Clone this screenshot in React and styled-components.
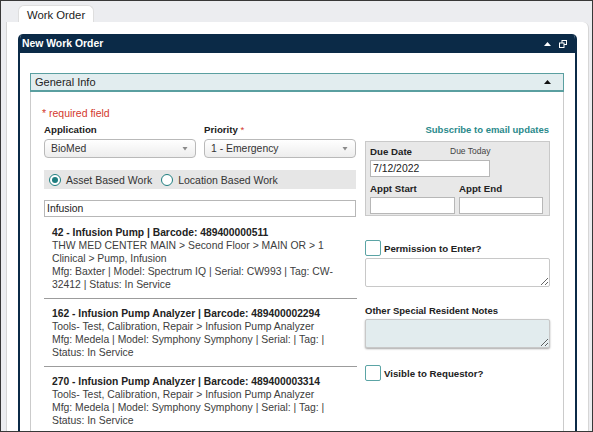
import React from "react";
import styled, { createGlobalStyle } from "styled-components";

const Global = createGlobalStyle`
  html, body { margin: 0; padding: 0; }
  body { font-family: "Liberation Sans", Arial, sans-serif; color: #333; }
  * { box-sizing: border-box; }
`;

const NAVY = "#0b2a47";
const TEAL = "#2a8a8b";

const Frame = styled.div`
  width: 593px;
  height: 432px;
  border: 1px solid #383838;
  background: #ecedf0;
  overflow: hidden;
  display: flex;
  flex-direction: column;
`;

const TabBar = styled.div`
  display: flex;
  padding: 4px 0 0 17px;
  flex: none;
`;

const Tab = styled.div`
  height: 17px;
  line-height: 18px;
  padding: 0 8px;
  background: #fff;
  border: 1px solid #dedede;
  border-bottom: none;
  border-radius: 6px 6px 0 0;
  font-size: 11.3px;
  color: #222;
`;

const Panel = styled.div`
  flex: 1;
  min-height: 0;
  margin: 0 3px 0 5px;
  padding: 12px 11px 0 11px;
  background: #fff;
  border-left: 1px solid #d6d6d6;
  border-right: 1px solid #d6d6d6;
  border-radius: 0 6px 0 0;
  display: flex;
  flex-direction: column;
`;

const Window = styled.div`
  flex: 1;
  min-height: 0;
  display: flex;
  flex-direction: column;
  border-radius: 5px 5px 0 0;
  overflow: hidden;
  background: #fff;
  border-left: 2px solid ${NAVY};
  border-right: 2px solid ${NAVY};
`;

const WindowHeader = styled.div`
  height: 19px;
  flex: none;
  background: ${NAVY};
  display: flex;
  align-items: center;
  justify-content: space-between;
  padding: 0 8px 0 2px;
  color: #fff;
  font-weight: bold;
  font-size: 10.4px;
`;

const HeaderIcons = styled.div`
  display: flex;
  align-items: center;
  gap: 8px;
`;

const WindowBody = styled.div`
  flex: 1;
  padding: 20px 11px 0 10px;
`;

const Section = styled.div`
  display: flex;
  flex-direction: column;
  height: 100%;
`;

const SectionHeader = styled.div`
  height: 19px;
  border: 1px solid #5a9fa0;
  border-bottom-width: 2px;
  background: #e2edef;
  display: flex;
  align-items: center;
  justify-content: space-between;
  padding: 0 12px 0 4px;
  font-size: 11px;
  color: #222;
`;

const SectionBody = styled.div`
  flex: 1;
  border-left: 1px solid #cbcbcb;
  border-right: 1px solid #cbcbcb;
  padding: 15px 13px 0 13px;
  display: grid;
  grid-template-columns: 313px 185px;
  grid-template-rows: auto 1fr;
  column-gap: 8px;
  align-content: start;
`;

const Required = styled.div`
  grid-column: 1 / span 2;
  color: #d3382d;
  font-size: 10.5px;
  line-height: 13px;
  margin-left: -2px;
  margin-bottom: -1px;
`;

const Column = styled.div`
  display: flex;
  flex-direction: column;
`;

const FieldRow = styled.div`
  display: grid;
  grid-template-columns: 152px 152px;
  column-gap: 8px;
  margin-top: 4px;
`;

const Label = styled.div`
  font-weight: bold;
  font-size: 9.7px;
  line-height: 13px;
  color: #222;
`;

const Star = styled.span`
  color: #d3382d;
  font-weight: normal;
`;

const Select = styled.div`
  margin-top: 3px;
  height: 19px;
  border: 1px solid #b9b9b9;
  border-radius: 4px;
  background: linear-gradient(#ffffff, #ededed);
  display: flex;
  align-items: center;
  justify-content: space-between;
  padding: 0 7px 0 6px;
  font-size: 10.4px;
  color: #333;
`;

const RadioBar = styled.div`
  margin-top: 12px;
  height: 19px;
  width: 312px;
  background: #e6e6e6;
  display: flex;
  align-items: center;
  padding-left: 5px;
  font-size: 10.5px;
  color: #333;
`;

const RadioOption = styled.label`
  display: flex;
  align-items: center;
  gap: 5px;
  margin-right: 9px;
`;

const RadioCircle = styled.span`
  width: 12px;
  height: 12px;
  border-radius: 50%;
  border: 1.4px solid #1f7e80;
  display: flex;
  align-items: center;
  justify-content: center;
  background: #fff;
  &::after {
    content: "";
    width: 6px;
    height: 6px;
    border-radius: 50%;
    background: ${(p) => (p.$checked ? "#1f7e80" : "transparent")};
  }
`;

const TextInput = styled.div`
  margin-top: ${(p) => p.$mt || 0}px;
  width: ${(p) => p.$w}px;
  height: 17px;
  border: 1px solid #b7b7b7;
  background: #fff;
  font-size: 10.4px;
  line-height: 15px;
  padding-left: 2px;
  color: #222;
`;

const List = styled.div`
  margin-top: 1px;
  display: flex;
  flex-direction: column;
`;

const Item = styled.div`
  padding: 8px 16px 7px 8px;
  border-bottom: 1px solid #9c9c9c;
  font-size: 10.4px;
  line-height: 13px;
  color: #3d3d3d;
  &:last-child { border-bottom: none; }
`;

const ItemTitle = styled.div`
  font-weight: bold;
  font-size: 10.3px;
  color: #222;
`;

const Subscribe = styled.div`
  margin-top: 4px;
  text-align: right;
  padding-right: 1px;
  font-weight: bold;
  font-size: 9.5px;
  line-height: 13px;
  color: ${TEAL};
`;

const DueBox = styled.div`
  margin-top: 5px;
  height: 75px;
  border: 1px solid #c9c9c9;
  background: #e8e8e8;
  padding: 3px 5px 0 4px;
  display: flex;
  flex-direction: column;
`;

const DueHeader = styled.div`
  display: grid;
  grid-template-columns: 80px auto;
  align-items: center;
`;

const DueToday = styled.div`
  font-size: 8.5px;
  color: #444;
  line-height: 13px;
`;

const ApptGrid = styled.div`
  margin-top: 5px;
  display: grid;
  grid-template-columns: 85px 84px;
  column-gap: 4px;
  row-gap: 2px;
`;

const CheckRow = styled.label`
  margin-top: ${(p) => p.$mt}px;
  display: flex;
  align-items: center;
  gap: 3px;
`;

const CheckBox = styled.span`
  width: 16px;
  height: 16px;
  border: 1.3px solid #5ba4a5;
  border-radius: 2px;
  background: #fff;
`;

const CheckLabel = styled.span`
  font-weight: bold;
  font-size: 9.7px;
  color: #222;
`;

const TextArea = styled.textarea`
  display: block;
  margin-top: ${(p) => p.$mt}px;
  width: 185px;
  height: 29px;
  border: 1px solid #c8c8c8;
  border-radius: 2px;
  background: ${(p) => (p.$tinted ? "#e2ecee" : "#fff")};
  box-shadow: ${(p) => (p.$tinted ? "0 1px 2px rgba(0,0,0,0.35)" : "none")};
  resize: both;
  outline: none;
  padding: 2px;
  font-family: inherit;
`;

const NotesLabel = styled(Label)`
  margin-top: 17px;
  font-size: 9.5px;
`;

const Caret = ({ color = "#8a8a8a" }) => (
  <svg width="6" height="4" viewBox="0 0 6 4">
    <polygon points="0.5,0 5.5,0 3,3.5" fill={color} />
  </svg>
);

const UpTri = ({ color }) => (
  <svg width="7" height="4" viewBox="0 0 7 4">
    <polygon points="0,4 7,4 3.5,0" fill={color} />
  </svg>
);

const RestoreIcon = () => (
  <svg width="8" height="8" viewBox="0 0 8 8">
    <rect x="3" y="0.5" width="4.5" height="4" fill="none" stroke="#fff" strokeWidth="1" />
    <rect x="0.5" y="3" width="4.5" height="4.5" fill={NAVY} stroke="#fff" strokeWidth="1" />
  </svg>
);

const items = [
  {
    title: "42 - Infusion Pump | Barcode: 489400000511",
    path: "THW MED CENTER MAIN > Second Floor > MAIN OR > 1 Clinical > Pump, Infusion",
    info: "Mfg: Baxter | Model: Spectrum IQ | Serial: CW993 | Tag: CW-32412 | Status: In Service",
  },
  {
    title: "162 - Infusion Pump Analyzer | Barcode: 489400002294",
    path: "Tools- Test, Calibration, Repair > Infusion Pump Analyzer",
    info: "Mfg: Medela | Model: Symphony Symphony | Serial: | Tag: | Status: In Service",
  },
  {
    title: "270 - Infusion Pump Analyzer | Barcode: 489400003314",
    path: "Tools- Test, Calibration, Repair > Infusion Pump Analyzer",
    info: "Mfg: Medela | Model: Symphony Symphony | Serial: | Tag: | Status: In Service",
  },
];

export default function App() {
  return (
    <>
      <Global />
      <Frame>
        <TabBar>
          <Tab>Work Order</Tab>
        </TabBar>
        <Panel>
          <Window>
            <WindowHeader>
              <span>New Work Order</span>
              <HeaderIcons>
                <UpTri color="#fff" />
                <RestoreIcon />
              </HeaderIcons>
            </WindowHeader>
            <WindowBody>
              <Section>
                <SectionHeader>
                  <span>General Info</span>
                  <UpTri color="#111" />
                </SectionHeader>
                <SectionBody>
                  <Required>* required field</Required>
                  <Column>
                    <FieldRow>
                      <div>
                        <Label>Application</Label>
                        <Select>
                          <span>BioMed</span>
                          <Caret />
                        </Select>
                      </div>
                      <div>
                        <Label>
                          Priority <Star>*</Star>
                        </Label>
                        <Select>
                          <span>1 - Emergency</span>
                          <Caret />
                        </Select>
                      </div>
                    </FieldRow>
                    <RadioBar>
                      <RadioOption>
                        <RadioCircle $checked />
                        Asset Based Work
                      </RadioOption>
                      <RadioOption>
                        <RadioCircle />
                        Location Based Work
                      </RadioOption>
                    </RadioBar>
                    <TextInput $mt={11} $w={312}>Infusion</TextInput>
                    <List>
                      {items.map((it) => (
                        <Item key={it.title}>
                          <ItemTitle>{it.title}</ItemTitle>
                          <div>{it.path}</div>
                          <div>{it.info}</div>
                        </Item>
                      ))}
                    </List>
                  </Column>
                  <Column>
                    <Subscribe>Subscribe to email updates</Subscribe>
                    <DueBox>
                      <DueHeader>
                        <Label>Due Date</Label>
                        <DueToday>Due Today</DueToday>
                      </DueHeader>
                      <TextInput $mt={2} $w={120}>7/12/2022</TextInput>
                      <ApptGrid>
                        <Label>Appt Start</Label>
                        <Label>Appt End</Label>
                        <TextInput $w={85} />
                        <TextInput $w={84} />
                      </ApptGrid>
                    </DueBox>
                    <CheckRow $mt={24}>
                      <CheckBox />
                      <CheckLabel>Permission to Enter?</CheckLabel>
                    </CheckRow>
                    <TextArea $mt={2} readOnly />
                    <NotesLabel>Other Special Resident Notes</NotesLabel>
                    <TextArea $mt={2} $tinted readOnly />
                    <CheckRow $mt={17}>
                      <CheckBox />
                      <CheckLabel>Visible to Requestor?</CheckLabel>
                    </CheckRow>
                  </Column>
                </SectionBody>
              </Section>
            </WindowBody>
          </Window>
        </Panel>
      </Frame>
    </>
  );
}
